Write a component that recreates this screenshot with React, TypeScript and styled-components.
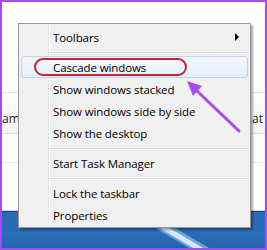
import styled, { createGlobalStyle } from "styled-components";

const GlobalStyle = createGlobalStyle`
	html, body {
		margin: 0;
		padding: 0;
		background: #ffffff;
	}
	body {
		font-family: "Open Sans", "Noto Sans", sans-serif;
	}
`;

const Frame = styled.div`
	position: relative;
	width: 267px;
	height: 250px;
	box-sizing: border-box;
	border: 2px solid #a64bf4;
	overflow: hidden;
	display: flex;
	flex-direction: column;
	background: #ffffff;
`;

const TopArea = styled.div`
	height: 90px;
	flex-shrink: 0;
	background: #ffffff;
`;

const HeaderBand = styled.div`
	height: 34px;
	flex-shrink: 0;
	border-top: 1px solid #e3e3e3;
	border-bottom: 1px solid #dedede;
	background: linear-gradient(#ffffff, #f3f3f3);
	display: flex;
	align-items: flex-end;
	justify-content: space-between;
	padding: 0 2px 6px 0;
	font-size: 12px;
	color: #1e1e1e;
`;

const Band = styled.div`
	height: 28px;
	flex-shrink: 0;
	border-bottom: 1px solid #e8e8e8;
	background: #fdfdfd;
`;

const Filler = styled.div`
	flex: 1;
	background: #ffffff;
	border-bottom: 1px solid #d6dbe2;
`;

const Taskbar = styled.div`
	position: relative;
	height: 36px;
	flex-shrink: 0;
	border-top: 1px solid #18416f;
	background: linear-gradient(#2a6ab4, #2a6cb8 60%, #2465ad);
	overflow: hidden;

	svg {
		display: block;
	}
`;

const Menu = styled.div`
	position: absolute;
	left: 16px;
	top: 21px;
	width: 233px;
	box-sizing: border-box;
	padding: 2px 0 1px;
	background: #f0f0f0;
	border: 1px solid #979797;
	box-shadow: 2px 2px 2px rgba(0, 0, 0, 0.35);
	font-size: 11.5px;
	letter-spacing: -0.1px;
	color: #000000;

	&::before {
		content: "";
		position: absolute;
		left: 29px;
		top: 1px;
		bottom: 1px;
		width: 1px;
		background: #e2e3e3;
		box-shadow: 1px 0 0 #ffffff;
	}
`;

const Item = styled.div<{ $active?: boolean }>`
	position: relative;
	z-index: 1;
	height: 22px;
	margin: 0 2px;
	padding-left: 31px;
	padding-right: 8px;
	box-sizing: border-box;
	display: flex;
	align-items: center;
	justify-content: space-between;
	border: 1px solid ${(p) => (p.$active ? "#b8d6fb" : "transparent")};
	border-radius: 3px;
	background: ${(p) =>
		p.$active ? "linear-gradient(#f4f8fd, #e6eefa)" : "transparent"};
	white-space: nowrap;
`;

const Separator = styled.div`
	position: relative;
	z-index: 1;
	height: 8px;
	margin: 0 2px 0 29px;
	display: flex;
	align-items: center;

	&::after {
		content: "";
		flex: 1;
		height: 1px;
		background: #e0e0e0;
		box-shadow: 0 1px 0 #ffffff;
	}
`;

const SubArrow = styled.span`
	width: 0;
	height: 0;
	border-top: 4px solid transparent;
	border-bottom: 4px solid transparent;
	border-left: 4px solid #000000;
`;

const Oval = styled.span`
	position: absolute;
	left: 12px;
	top: 1px;
	width: 153px;
	height: 18px;
	box-sizing: border-box;
	border: 2px solid #c3252c;
	border-radius: 10px;
`;

const Pointer = styled.svg`
	position: absolute;
	left: -2px;
	top: -2px;
	z-index: 5;
	pointer-events: none;
`;

const items: (string | null)[] = [
	"Toolbars",
	null,
	"Cascade windows",
	"Show windows stacked",
	"Show windows side by side",
	"Show the desktop",
	null,
	"Start Task Manager",
	null,
	"Lock the taskbar",
	"Properties",
];

export default function App() {
	return (
		<>
			<GlobalStyle />
			<Frame>
				<TopArea />
				<HeaderBand>
					<span>am</span>
					<span>at</span>
				</HeaderBand>
				<Band />
				<Filler />
				<Taskbar>
					{/* wallpaper glow streak */}
					<svg width="263" height="36" viewBox="0 0 263 36">
						<polygon points="150,14 166,12 214,40 194,40" fill="#a9d6ff" opacity="0.55" />
						<polygon points="156,15 164,14 208,40 198,40" fill="#e8f5ff" opacity="0.85" />
					</svg>
				</Taskbar>

				<Menu>
					{items.map((label, i) =>
						label === null ? (
							<Separator key={i} />
						) : (
							<Item key={i} $active={label === "Cascade windows"}>
								{label}
								{label === "Toolbars" && <SubArrow />}
								{label === "Cascade windows" && <Oval />}
							</Item>
						)
					)}
				</Menu>

				<Pointer width="267" height="250" viewBox="0 0 267 250">
					<line
						x1="239"
						y1="131"
						x2="196"
						y2="90"
						stroke="#a64bf4"
						strokeWidth="3"
						strokeLinecap="round"
					/>
					<polygon points="187,81 202,86 193,96" fill="#a64bf4" />
				</Pointer>
			</Frame>
		</>
	);
}
